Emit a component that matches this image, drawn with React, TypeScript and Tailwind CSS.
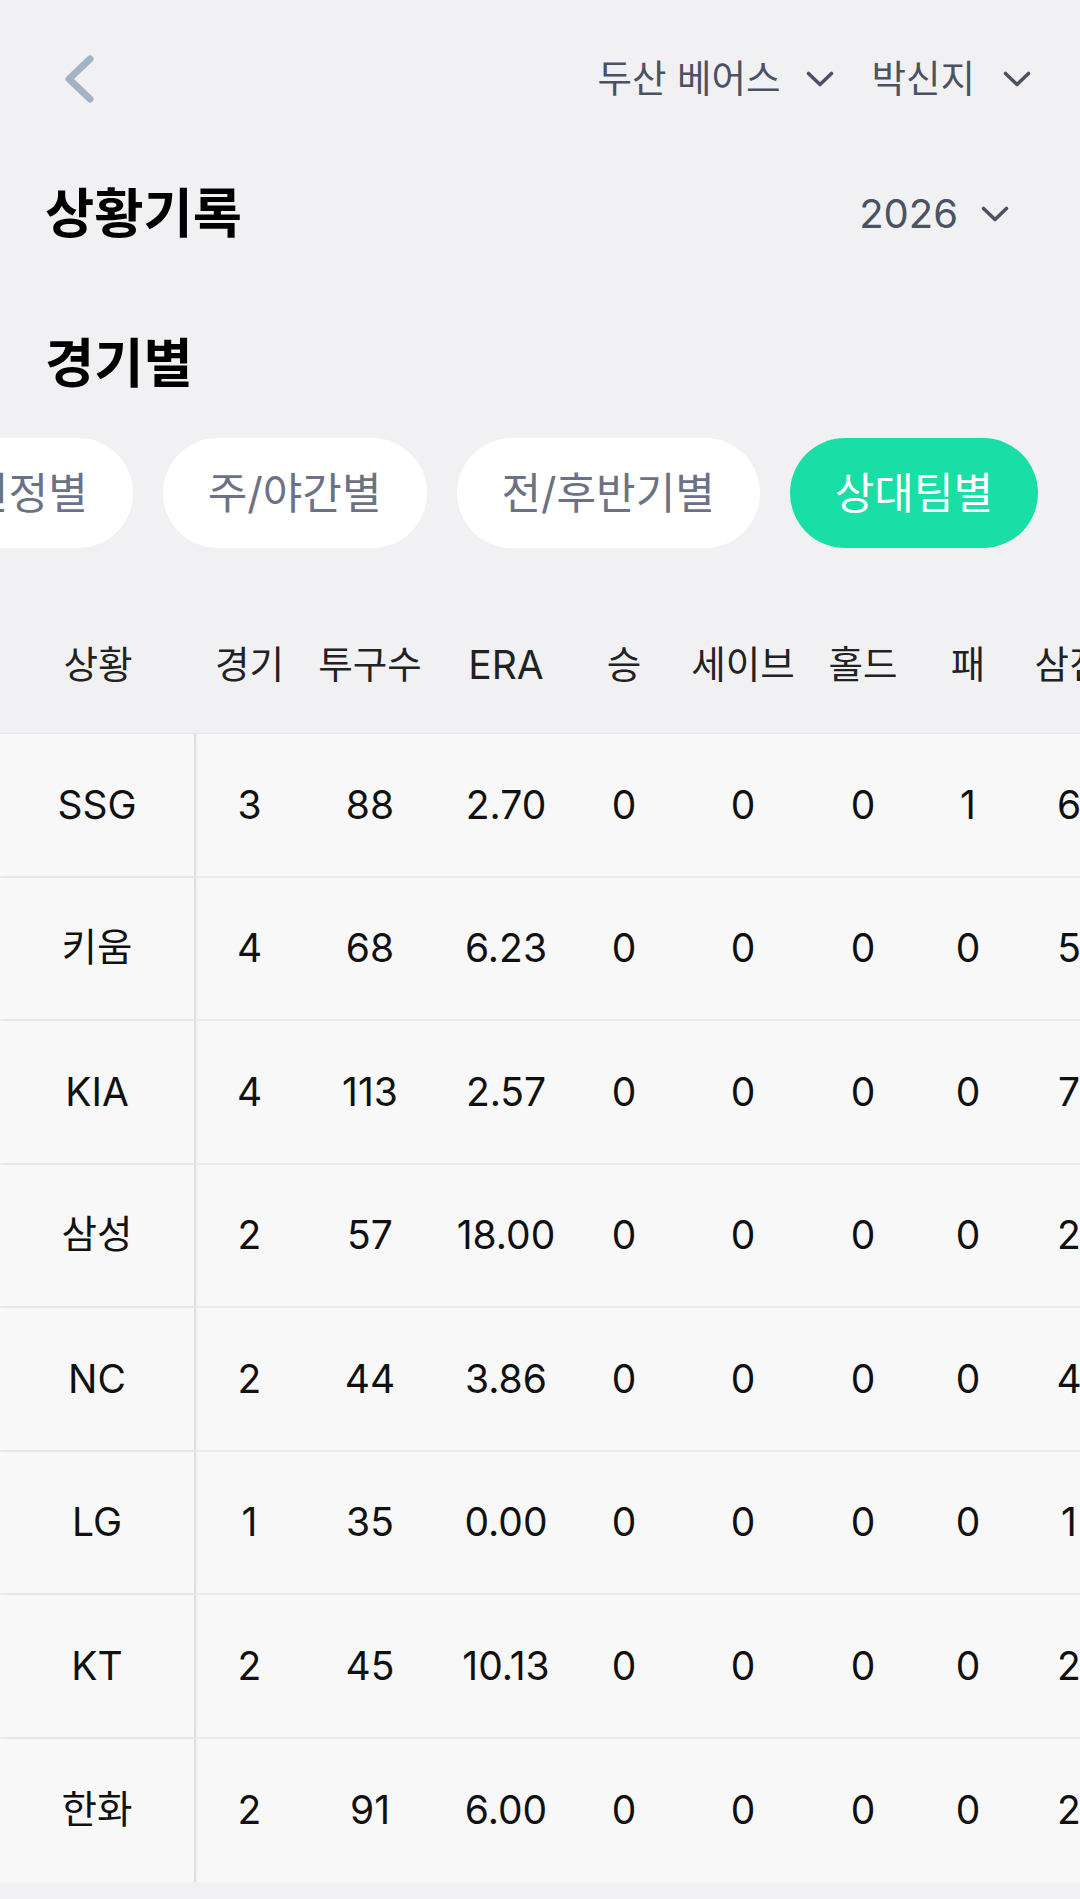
const tabs = ["홈/원정별", "주/야간별", "전/후반기별", "상대팀별"];
const activeTab = "상대팀별";

const columns = [
  { label: "상황", w: "w-[196px]" },
  { label: "경기", w: "w-[107px]" },
  { label: "투구수", w: "w-[134px]" },
  { label: "ERA", w: "w-[138px]" },
  { label: "승", w: "w-[98px]" },
  { label: "세이브", w: "w-[140px]" },
  { label: "홀드", w: "w-[100px]" },
  { label: "패", w: "w-[110px]" },
  { label: "삼진", w: "w-[92px]" },
  { label: "볼넷", w: "w-[110px]" },
  { label: "피안타", w: "w-[130px]" },
];

const rows: (string | number)[][] = [
  ["SSG", 3, 88, "2.70", 0, 0, 0, 1, 6, 2, 5],
  ["키움", 4, 68, "6.23", 0, 0, 0, 0, 5, 3, 7],
  ["KIA", 4, 113, "2.57", 0, 0, 0, 0, 7, 1, 6],
  ["삼성", 2, 57, "18.00", 0, 0, 0, 0, 2, 2, 6],
  ["NC", 2, 44, "3.86", 0, 0, 0, 0, 4, 1, 4],
  ["LG", 1, 35, "0.00", 0, 0, 0, 0, 1, 0, 1],
  ["KT", 2, 45, "10.13", 0, 0, 0, 0, 2, 2, 5],
  ["한화", 2, 91, "6.00", 0, 0, 0, 0, 2, 1, 4],
];

const isHangul = (v: string | number) => /[가-힣]/.test(String(v));

const Chevron = ({ className }: { className?: string }) => (
  <svg viewBox="0 0 30 18" className={className} fill="none">
    <path d="M3.5 3.5 L15 14.5 L26.5 3.5" stroke="#4b5262" strokeWidth="3.6" strokeLinecap="round" strokeLinejoin="round" />
  </svg>
);

const App = () => {
  return (
    <div className="min-h-screen w-full bg-[#f1f1f4] font-['Inter','Noto_Sans_CJK_KR',sans-serif] overflow-hidden">
      {/* Top bar */}
      <header className="flex h-[158px] items-center justify-between pl-[57px] pr-[48px]">
        <button className="flex h-[60px] w-[44px] items-center justify-center">
          <svg viewBox="0 0 36 56" className="h-[56px] w-[36px]" fill="none">
            <path d="M29 8 L8 28 L29 48" stroke="#a3b3c6" strokeWidth="7" strokeLinecap="round" strokeLinejoin="round" />
          </svg>
        </button>
        <div className="flex items-center text-[37.5px] text-[#4b5262]">
          <span>두산 베어스</span>
          <Chevron className="ml-[24px] h-[18px] w-[30px]" />
          <span className="ml-[37px]">박신지</span>
          <Chevron className="ml-[27px] h-[18px] w-[30px]" />
        </div>
      </header>

      {/* Title */}
      <div className="flex h-[112px] items-center justify-between pl-[45px] pr-[70px]">
        <h1 className="text-[53.5px] font-bold text-black">상황기록</h1>
        <div className="flex items-center text-[40px] text-[#4b5262]">
          <span>2026</span>
          <Chevron className="ml-[22px] h-[18px] w-[30px]" />
        </div>
      </div>

      <div className="mt-[30px] flex h-[128px] items-center pl-[45px]">
        <h2 className="text-[53.5px] font-bold text-black">경기별</h2>
      </div>

      {/* Tabs */}
      <div className="mt-[10px] overflow-hidden">
        <div className="ml-[-131px] flex gap-[30px]">
          {tabs.map((t) => (
            <button
              key={t}
              className={`flex h-[110px] shrink-0 items-center rounded-full px-[45px] text-[43px] ${
                t === activeTab ? "bg-[#19dfa6] text-white" : "bg-white text-[#6b7285]"
              }`}
            >
              {t}
            </button>
          ))}
        </div>
      </div>

      {/* Table */}
      <div className="mt-[49px] overflow-hidden">
        <div className="flex h-[136px] items-center">
          {columns.map((c) => (
            <div
              key={c.label}
              className={`${c.w} shrink-0 text-center text-[#222] ${isHangul(c.label) ? "text-[37.5px]" : "text-[39px]"}`}
            >
              {c.label}
            </div>
          ))}
        </div>

        <div className="border-t border-[#e8e8ea] bg-[#f8f8f9]">
          {rows.map((r, i) => (
            <div
              key={i}
              className={`flex h-[143.5px] items-center ${i < rows.length - 1 ? "border-b-2 border-[#ebebed]" : ""}`}
            >
              {r.map((v, j) => (
                <div
                  key={j}
                  className={`${columns[j].w} flex h-full shrink-0 items-center justify-center text-[#111] ${
                    isHangul(v) ? "text-[38.5px]" : "text-[39px]"
                  } ${j === 0 ? "border-r-2 border-[#dedee0] shadow-[2px_0_3px_rgba(0,0,0,0.03)]" : ""}`}
                >
                  {v}
                </div>
              ))}
            </div>
          ))}
        </div>
      </div>
    </div>
  );
};

export default App;
